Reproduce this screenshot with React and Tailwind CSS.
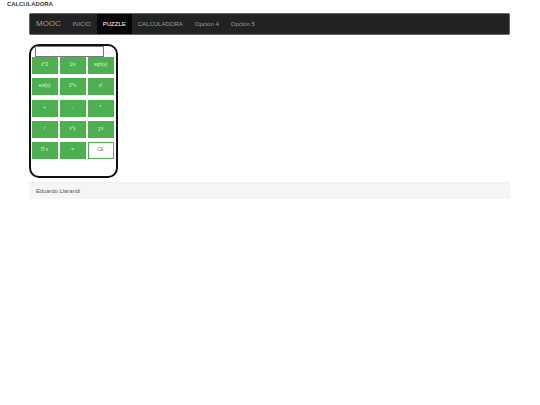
const KEYS = ["x^2", "1/x", "sqrt(x)", "ent(x)", "2^x", "x!", "+", "-", "*", "/", "x^y", "∑x", "Π x", "=", "CE"];
const LINKS = ["INICIO", "PUZZLE", "CALCULADORA", "Opción 4", "Opción 5"];

export default function App() {
  return (
    <div className="min-h-[405px] bg-white font-['Liberation_Sans',Arial,sans-serif] text-[#333]">
      <h1 className="h-[13px] pl-[7px] pt-px text-[5.9px] leading-[6px] font-bold">CALCULADORA</h1>

      <div className="ml-[29px] w-[481px]">
        <nav className="flex h-[22px] items-stretch rounded-[1.5px] border border-[#666] bg-[#222]">
          <span className="flex items-center pl-[6px] pr-[5.5px] text-[8px] text-[#9d9d9d]">MOOC</span>
          {LINKS.map((link) => (
            <a
              key={link}
              className={`flex items-center px-[6px] text-[6px] ${
                link === "PUZZLE" ? "bg-[#080808] text-white" : "text-[#9d9d9d]"
              }`}
            >
              {link}
            </a>
          ))}
        </nav>

        <div className="mt-[9px] h-[134px] w-[89px] rounded-[10px] border-2 border-[#111]">
          <input
            readOnly
            className="ml-[3.5px] block h-[11px] w-[69px] border border-[#777] bg-white"
          />
          <div className="ml-[0.5px] grid w-[82px] grid-cols-[26px_26px_26px] gap-x-[2px] gap-y-[4.3px]">
            {KEYS.map((key) =>
              key === "CE" ? (
                <button key={key} className="h-[17px] border border-[#4caf50] bg-white text-[4.6px] text-[#777]">
                  {key}
                </button>
              ) : (
                <button key={key} className="h-[17px] bg-[#4caf50] text-[4.6px] text-[#e4f3e5]">
                  {key}
                </button>
              )
            )}
          </div>
        </div>

        <footer className="mt-[4px] flex h-[17px] items-center border-t border-[#eee] bg-[#f5f5f5] pl-[7px] text-[5.8px] text-[#555]">
          Eduardo Llarandi
        </footer>
      </div>
    </div>
  );
}
